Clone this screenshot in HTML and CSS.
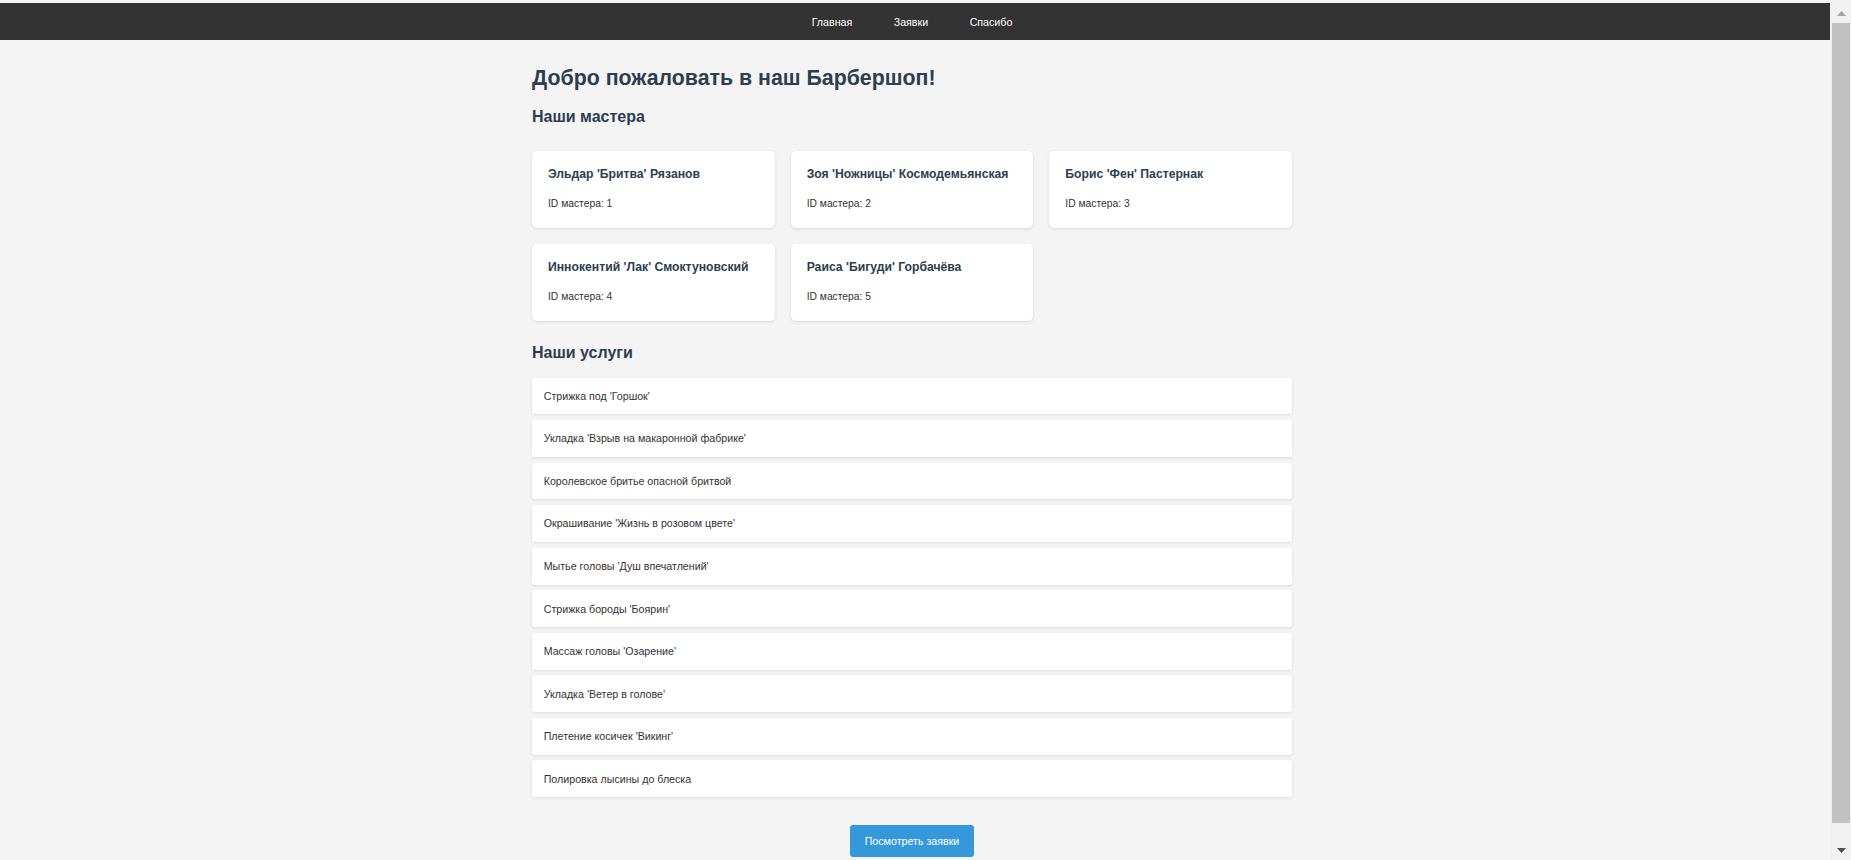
FILE: index.html
```html
<!DOCTYPE html>
<html lang="ru">
<head>
<meta charset="utf-8">
<title>Барбершоп</title>
<link rel="stylesheet" href="styles.css">
</head>
<body>
<nav class="topnav">
  <a href="#" class="topnav-link">Главная</a>
  <a href="#" class="topnav-link">Заявки</a>
  <a href="#" class="topnav-link">Спасибо</a>
</nav>
<div class="page">
  <main class="container">
    <h1 class="page-title">Добро пожаловать в наш Барбершоп!</h1>
    <h2 class="section-title">Наши мастера</h2>
    <div class="masters">
      <div class="master-card"><h3 class="master-name">Эльдар 'Бритва' Рязанов</h3><p class="master-id">ID мастера: 1</p></div>
      <div class="master-card"><h3 class="master-name">Зоя 'Ножницы' Космодемьянская</h3><p class="master-id">ID мастера: 2</p></div>
      <div class="master-card"><h3 class="master-name">Борис 'Фен' Пастернак</h3><p class="master-id">ID мастера: 3</p></div>
      <div class="master-card"><h3 class="master-name">Иннокентий 'Лак' Смоктуновский</h3><p class="master-id">ID мастера: 4</p></div>
      <div class="master-card"><h3 class="master-name">Раиса 'Бигуди' Горбачёва</h3><p class="master-id">ID мастера: 5</p></div>
    </div>
    <h2 class="section-title services-title">Наши услуги</h2>
    <ul class="services">
      <li class="service">Стрижка под 'Горшок'</li>
      <li class="service">Укладка 'Взрыв на макаронной фабрике'</li>
      <li class="service">Королевское бритье опасной бритвой</li>
      <li class="service">Окрашивание 'Жизнь в розовом цвете'</li>
      <li class="service">Мытье головы 'Душ впечатлений'</li>
      <li class="service">Стрижка бороды 'Боярин'</li>
      <li class="service">Массаж головы 'Озарение'</li>
      <li class="service">Укладка 'Ветер в голове'</li>
      <li class="service">Плетение косичек 'Викинг'</li>
      <li class="service">Полировка лысины до блеска</li>
    </ul>
    <div class="actions">
      <a href="#" class="btn">Посмотреть заявки</a>
    </div>
  </main>
</div>
<aside class="scrollbar" aria-hidden="true">
  <div class="scroll-btn">
    <svg width="9" height="5" viewBox="0 0 9 5"><polygon points="4.5,0 9,5 0,5" fill="#a3a3a3"/></svg>
  </div>
  <div class="scroll-track"><div class="scroll-thumb"></div></div>
  <div class="scroll-btn">
    <svg width="9" height="5" viewBox="0 0 9 5"><polygon points="0,0 9,0 4.5,5" fill="#505050"/></svg>
  </div>
</aside>
</body>
</html>
```

FILE: styles.css
```css
html, body {
  margin: 0;
  padding: 0;
}
body {
  background: #f4f4f4;
  font-family: "Liberation Sans", Arial, sans-serif;
  color: #333;
  padding-top: 3px;
  margin-right: 21px;
}

.topnav {
  background: #333;
  height: 37px;
  display: flex;
  justify-content: center;
  align-items: center;
  gap: 41.5px;
  padding-right: 6px;
}
.topnav-link {
  color: #fff;
  text-decoration: none;
  font-size: 10.67px;
}

.page {
  padding-right: 6px;
}

.container {
  width: 760px;
  margin: 0 auto;
  padding: 25.6px 0 33px;
  display: flex;
  flex-direction: column;
}

.page-title {
  margin: 0;
  font-size: 21.33px;
  line-height: 24.5px;
  color: #2c3e50;
}

.section-title {
  margin: 17.6px 0 0;
  font-size: 16px;
  line-height: 18.4px;
  color: #2c3e50;
}

.masters {
  display: grid;
  grid-template-columns: repeat(3, 1fr);
  gap: 16px;
  margin-top: 25px;
}
.master-card {
  background: #fff;
  border-radius: 5px;
  box-shadow: 0 1px 3px rgba(0, 0, 0, 0.12);
  padding: 16px 16px 0;
  height: 77px;
  box-sizing: border-box;
}
.master-name {
  margin: 0;
  font-size: 12.2px;
  line-height: 14.4px;
  color: #2c3e50;
}
.master-id {
  margin: 16.5px 0 0;
  font-size: 10.3px;
  line-height: 12px;
  color: #333;
}

.services-title {
  margin-top: 23px;
}

.services {
  list-style: none;
  margin: 15px 0 0;
  padding: 0;
}
.service {
  background: #fff;
  border-radius: 3px;
  box-shadow: 0 1px 3px rgba(0, 0, 0, 0.1);
  padding: 12.3px 11.7px;
  font-size: 10.67px;
  line-height: 12.3px;
  margin-bottom: 5.67px;
}
.service:last-child {
  margin-bottom: 0;
}

.actions {
  display: flex;
  justify-content: center;
  margin-top: 28px;
}
.btn {
  display: block;
  width: 124px;
  height: 32px;
  line-height: 32px;
  text-align: center;
  background: #3498db;
  color: #fff;
  text-decoration: none;
  font-size: 10.67px;
  border-radius: 3px;
}

/* fake browser scrollbar */
.scrollbar {
  position: fixed;
  top: 0;
  right: 0;
  width: 20px;
  height: 100vh;
  box-sizing: border-box;
  padding-top: 3px;
  background: #f1f1f1;
  display: flex;
  flex-direction: column;
}
.scroll-btn {
  height: 20px;
  flex: none;
  display: flex;
  align-items: center;
  justify-content: center;
}
.scroll-track {
  flex: 1;
  padding: 0 1px;
}
.scroll-thumb {
  height: 800px;
  background: #c1c1c1;
}
```
